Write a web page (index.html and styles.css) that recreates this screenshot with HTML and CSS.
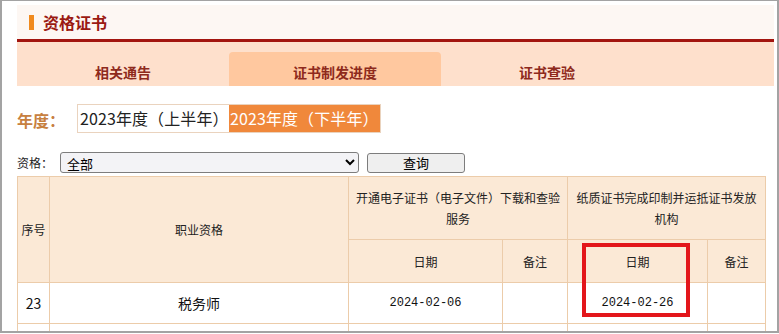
FILE: index.html
```html
<!DOCTYPE html>
<html lang="zh-CN">
<head>
  <meta charset="UTF-8">
  <title>资格证书</title>
  <link rel="stylesheet" href="styles.css">
</head>
<body>

<div class="page">
  <div class="main">
    <div class="title-bar">
      <span class="title-mark"></span>
      <h1>资格证书</h1>
    </div>

    <div class="tabs">
      <div class="tab">相关通告</div>
      <div class="tab active">证书制发进度</div>
      <div class="tab">证书查验</div>
    </div>

    <div class="year-row">
      <span class="year-label">年度：</span>
      <div class="year-switch">
        <span class="year-opt">2023年度（上半年）</span>
        <span class="year-opt current">2023年度（下半年）</span>
      </div>
    </div>

    <div class="filter-row">
      <span class="filter-label">资格：</span>
      <select class="filter-select">
        <option>全部</option>
      </select>
      <button class="filter-btn">查询</button>
    </div>

    <table class="progress">
      <colgroup>
        <col style="width:32px">
        <col style="width:299px">
        <col style="width:154px">
        <col style="width:65px">
        <col style="width:140px">
        <col style="width:58px">
      </colgroup>
      <tr class="head1">
        <th rowspan="2" class="num">序号</th>
        <th rowspan="2">职业资格</th>
        <th colspan="2">开通电子证书（电子文件）下载和查验服务</th>
        <th colspan="2">纸质证书完成印制并运抵证书发放机构</th>
      </tr>
      <tr class="head2">
        <th>日期</th>
        <th>备注</th>
        <th class="marked">日期<span class="highlight"></span></th>
        <th>备注</th>
      </tr>
      <tr class="row">
        <td class="num">23</td>
        <td>税务师</td>
        <td class="date">2024-02-06</td>
        <td></td>
        <td class="date">2024-02-26</td>
        <td></td>
      </tr>
      <!-- ligne suivante, coupée par le bas de la fenêtre -->
      <tr class="row">
        <td></td>
        <td></td>
        <td></td>
        <td></td>
        <td></td>
        <td></td>
      </tr>
    </table>
  </div>
</div>

</body>
</html>
```

FILE: styles.css
```css
html, body {
  margin: 0;
  padding: 0;
  background: #fff;
}
body {
  font-family: "Noto Sans CJK SC", "Liberation Sans", sans-serif;
  color: #222;
}
.page {
  width: 775px;
  height: 330px;
  border: 2px solid #a3a3a3;
  border-top-width: 1px;
  overflow: hidden;
}
.main {
  margin-left: 15px;
  padding-top: 4px;
  width: 757px;
}

/* titre */
.title-bar {
  display: flex;
  align-items: center;
  height: 34px;
  background: #fdf7f3;
  border-bottom: 3px solid #a3150f;
  padding-left: 12px;
}
.title-mark {
  width: 5px;
  height: 15px;
  background: #f08a1e;
  margin-right: 9px;
}
.title-bar h1 {
  margin: 0;
  font-size: 16px;
  font-weight: bold;
  color: #9b1a12;
  line-height: 20px;
}

/* onglets */
.tabs {
  display: flex;
  align-items: flex-end;
  height: 44px;
  background: #fee0cc;
}
.tab {
  width: 212px;
  height: 34px;
  box-sizing: border-box;
  padding-top: 10px;
  line-height: 20px;
  text-align: center;
  font-size: 14px;
  font-weight: bold;
  color: #8e2a1c;
}
.tab.active {
  background: #ffc89f;
  border-radius: 4px 4px 0 0;
}

/* année */
.year-row {
  display: flex;
  align-items: center;
  margin-top: 18px;
  height: 29px;
}
.year-label {
  width: 60px;
  font-size: 16px;
  font-weight: bold;
  color: #c7803f;
  padding-top: 2px;
}
.year-switch {
  display: flex;
  height: 29px;
  box-sizing: border-box;
  border: 1px solid #ead3be;
}
.year-opt {
  width: 149px;
  line-height: 27px;
  padding-left: 2px;
  font-size: 16px;
  color: #222;
  white-space: nowrap;
  letter-spacing: 0.1px;
}
.year-opt.current {
  width: 150px;
  padding-left: 1px;
  background: #f0883b;
  color: #fff;
}

/* filtre */
.filter-row {
  display: flex;
  align-items: center;
  margin-top: 19px;
  height: 21px;
}
.filter-label {
  width: 43px;
  font-size: 12px;
  color: #222;
}
.filter-select {
  width: 299px;
  height: 21px;
  padding: 0 2px;
  font-family: "Noto Sans CJK SC", sans-serif;
  font-size: 13px;
  border: 1px solid #7d7d7d;
  border-radius: 3px;
  background: #f3f3f6;
  color: #000;
}
.filter-btn {
  width: 98px;
  height: 20px;
  margin-left: 8px;
  padding: 0;
  font-family: "Noto Sans CJK SC", sans-serif;
  font-size: 13px;
  line-height: 18px;
  border: 1px solid #7d7d7d;
  border-radius: 3px;
  background: #efefef;
  color: #000;
}

/* tableau */
.progress {
  margin-top: 3px;
  width: 748px;
  border-collapse: collapse;
  table-layout: fixed;
  font-size: 12px;
}
.progress th, .progress td {
  border: 1px solid #ecccaa;
  text-align: center;
  font-weight: normal;
  padding: 0 5px;
  line-height: 21px;
}
.progress th {
  background: #fbe9d6;
  color: #222;
}
.head1 th {
  height: 62px;
}
.head2 th {
  height: 42px;
}
.row td {
  height: 40px;
  font-size: 14px;
  color: #111;
}
.progress .num {
  padding: 0;
  white-space: nowrap;
}
.progress td.date {
  font-family: "Liberation Mono", monospace;
  font-size: 12px;
}
.marked {
  position: relative;
}
.highlight {
  position: absolute;
  left: 14px;
  top: 3px;
  width: 100px;
  height: 66px;
  border: 4px solid #e3161b;
}
```
